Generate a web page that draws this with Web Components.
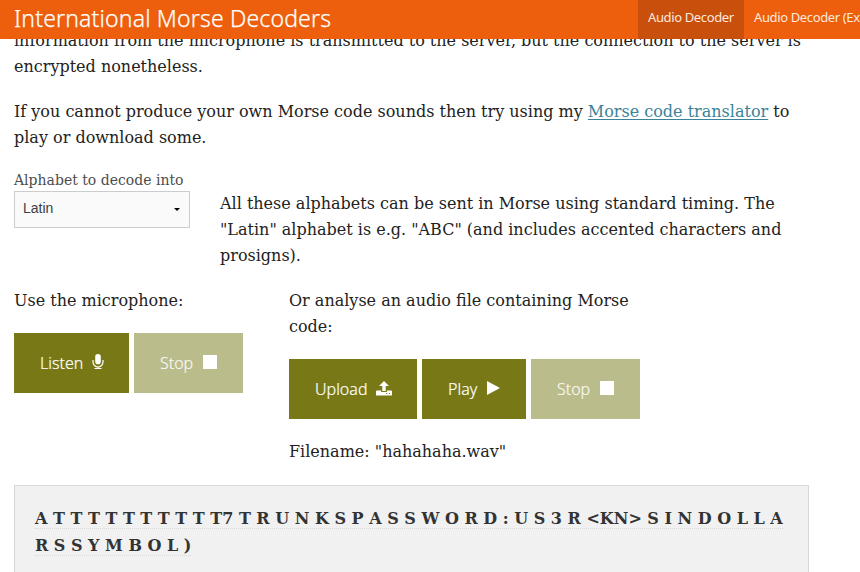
<!DOCTYPE html>
<html lang="en"><head><meta charset="utf-8"><title>International Morse Decoders</title>
<style>
html,body{margin:0;height:572px;overflow:hidden;background:#fff}
body{font:16px/26px "DejaVu Serif",serif;color:#222}
</style></head><body>
<decoder-page></decoder-page>
<script>
const define=(name,html,setup)=>customElements.define(name,class extends HTMLElement{
 connectedCallback(){
  if(this.shadowRoot)return;
  const t=document.createElement('template');t.innerHTML=html;
  this.attachShadow({mode:'open'}).append(t.content.cloneNode(true));
  if(setup)setup(this,this.shadowRoot);
 }
});
define('nav-item',`<style>
:host{display:block;box-sizing:border-box;height:39px;padding:0 10px;flex:none;font:13px/35px "Noto Sans",sans-serif;color:#ffe9dc;white-space:nowrap}
:host([active]){background:#c94f0c;width:106px}
span{letter-spacing:-.37px}
</style><span><slot></slot></span>`);
define('top-bar',`<style>
:host{display:flex;position:relative;z-index:1;height:39px;background:#ed5f0c;color:#fff;overflow:hidden}
h1{margin:0;flex:none;box-sizing:border-box;width:638px;padding-left:14px;font:350 23px/36px "Noto Sans",sans-serif;letter-spacing:.16px;white-space:nowrap}
h1 span{-webkit-text-stroke:.25px #fff}
</style><h1><span>International Morse Decoders</span></h1><nav-item active>Audio Decoder</nav-item><nav-item>Audio Decoder (Experimental)</nav-item>`);
define('action-icon',`<style>:host{display:block;flex:none}svg{display:block;fill:#fff}</style><svg></svg>`,(h,r)=>{
 const icons={
  mic:[12,16,'<rect x="3.2" y="0" width="5.6" height="10.2" rx="2.8"/><path d="M1 6v2a5 5 0 0 0 10 0V6M6 12.5v2M2.5 14.5h7" fill="none" stroke="#fff" stroke-width="1.2"/>'],
  stop:[14,14,'<path d="M0 0h14v14H0z"/>'],
  play:[13,14,'<path d="M0 0L13 7L0 14z"/>'],
  upload:[16,15,'<path d="M8 0l5 5h-3.3v5H6.3V5H3zM1 9.5h4.2v1.6h5.6V9.5H15a1 1 0 0 1 1 1V14a.6.6 0 0 1-.6.6H.6A.6.6 0 0 1 0 14v-3.5a1 1 0 0 1 1-1z"/><path d="M10.3 12.5h1.1M13 12.5h1.1" stroke="#787916"/>']};
 const [w,v,p]=icons[h.getRootNode().host.getAttribute('icon')],s=r.querySelector('svg');
 s.setAttribute('width',w);s.setAttribute('height',v);s.setAttribute('viewBox','0 0 '+w+' '+v);s.innerHTML=p;
});
define('action-button',`<style>
:host{display:block;width:var(--w);height:60px;flex:none;background:#787916;color:#fff}
:host([disabled]){background:#babc8b}
button{all:unset;box-sizing:border-box;display:flex;width:100%;height:60px;padding:0 26px;justify-content:space-between;align-items:center;font:350 16px/60px "Noto Sans",sans-serif;white-space:nowrap}
button span{-webkit-text-stroke:.2px #fff}
:host([disabled]) span{-webkit-text-stroke:.2px #f8f8f0;color:#f8f8f0}
action-icon{margin-bottom:2px}
:host([icon=mic]) action-icon{margin:0 -1px 3px 0}
:host([icon=upload]) action-icon{margin:0 -1px 1px 0}
</style><button><span><slot></slot></span><action-icon></action-icon></button>`);
define('alphabet-select',`<style>
:host{display:block;width:176px;padding-top:2px}
label{display:block;height:21px;font-size:14px;line-height:20px;color:#4d4d4d;white-space:nowrap;margin-top:-23px}
.box{box-sizing:border-box;height:37px;border:1px solid #ccc;background:#fafafa;display:flex;align-items:center;justify-content:space-between;padding:0 9px 3px 8px;font:14px/20px "Liberation Sans",sans-serif;color:#404040}
i{border:3px solid transparent;border-top-color:#000;border-bottom:0;margin-top:3px}
</style><label><span>Alphabet to decode into</span></label><div class="box"><span>Latin</span><i></i></div>`);
define('decoded-output',`<style>
:host{display:block;box-sizing:border-box;width:795px;height:87px;margin:20px 0 0 14px;padding:19px 20px;border:1px solid #d8d8d8;border-bottom:0;background:#f1f1f1;color:#333;font-weight:700;line-height:27px}
div{white-space:nowrap}
span{border-bottom:1px dotted #d9d9d9}
</style><div><span>A T T T T T T T T T T7 T R U N K S P A S S W O R D : U S 3 R &lt;KN&gt; S I N D O L L A</span></div><div><span>R S S Y M B O L )</span></div>`);
define('decoder-page',`<style>
:host{display:block}
main{margin-top:-11px}
p{margin:0 14px 19px;white-space:nowrap}
a{color:#3b8399;text-decoration:underline 1px;text-underline-offset:2px;text-decoration-skip-ink:none}
.alphabet{display:grid;grid-template-columns:176px 1fr;column-gap:30px;margin:40px 14px 19px;height:78px}
.alphabet p,.sources p{margin-left:0;margin-right:0}
.sources{display:grid;grid-template-columns:229px 1fr;column-gap:46px;margin-left:14px;height:177px}
.row{display:flex;gap:5px}
.sources .file{margin:20px 0 0}
</style><top-bar></top-bar><main>
<p>information from the microphone is transmitted to the server, but the connection to the server is<br>encrypted nonetheless.</p>
<p>If you cannot produce your own Morse code sounds then try using my <a>Morse code translator</a> to<br>play or download some.</p>
<div class="alphabet"><alphabet-select></alphabet-select><p>All these alphabets can be sent in Morse using standard timing. The<br>"Latin" alphabet is e.g. "ABC" (and includes accented characters and<br>prosigns).</p></div>
<div class="sources"><section><p>Use the microphone:</p><div class="row"><action-button icon="mic" style="--w:115px">Listen</action-button><action-button icon="stop" disabled style="--w:109px">Stop</action-button></div></section>
<section><p>Or analyse an audio file containing Morse<br>code:</p><div class="row"><action-button icon="upload" style="--w:128px">Upload</action-button><action-button icon="play" style="--w:104px">Play</action-button><action-button icon="stop" disabled style="--w:109px">Stop</action-button></div><p class="file">Filename: "hahahaha.wav"</p></section></div>
<decoded-output></decoded-output></main>`);
</script></body></html>
